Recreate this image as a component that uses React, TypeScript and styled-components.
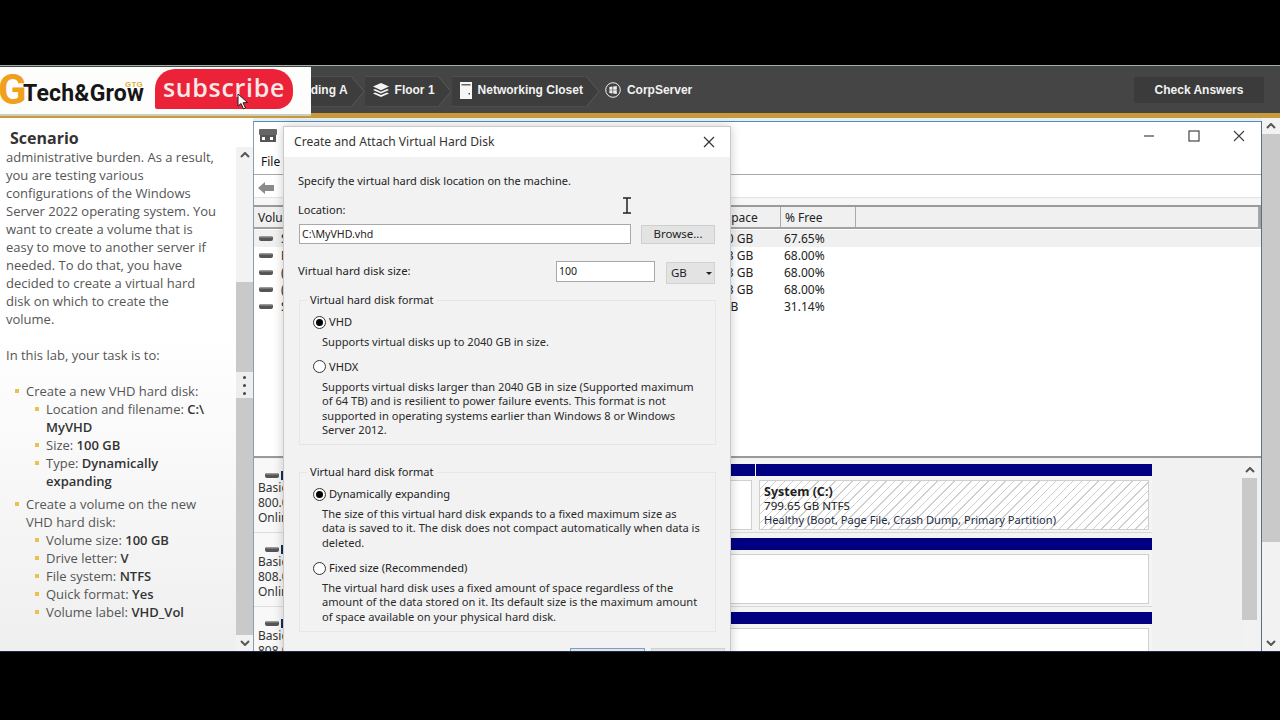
import React from "react";
import styled, { createGlobalStyle } from "styled-components";

const Global = createGlobalStyle`
  html, body { margin: 0; padding: 0; background: #000; overflow: hidden; }
  * { box-sizing: border-box; }
`;

const UI = `"Open Sans", "Noto Sans", sans-serif`;
const WIN = `"Noto Sans", "Open Sans", sans-serif`;

const Page = styled.div`
  width: 1280px; height: 720px; background: #000; display: flex; flex-direction: column;
`;
const Letterbox = styled.div<{ $h: number }>`
  height: ${(p) => p.$h}px; flex: none; background: #000;
`;
const Screen = styled.div`
  position: relative; height: 587px; flex: none; overflow: hidden; background: #e9eef1;
  display: flex; flex-direction: column; border-bottom: 1px solid #1c2a4a;
`;
const Toolbar = styled.div`
  height: 53px; flex: none; display: flex; align-items: center; justify-content: space-between;
  background: #454545; border-top: 1px solid #9fb0a8; padding: 0 16px 0 280px;
  border-bottom: 5px solid #c99a3c;
`;
const Crumbs = styled.div`
  display: flex; align-items: center; height: 31px; margin-top: 3px;
`;
const Crumb = styled.div`
  height: 31px; display: flex; align-items: center; gap: 6px; padding: 0 2px 2px 8px;
  font: bold 12px "Liberation Sans", sans-serif; color: #f2f2f2; white-space: nowrap;
  background: #3d3d3d; border-top: 1px solid #4e4e4e; border-bottom: 1px solid #4e4e4e;
`;
const LastCrumb = styled(Crumb)`
  background: transparent; border: none; padding: 0 0 2px 0; margin-left: 5px;
`;
const Check = styled.div`
  width: 130px; height: 26px; background: #3b3b3b; color: #f2f2f2; border-radius: 2px; margin-top: 1px;
  font: bold 12px "Liberation Sans", sans-serif; display: flex; align-items: center; justify-content: center;
`;
const Main = styled.div`
  flex: 1; min-height: 0; display: flex;
`;
const Lab = styled.div`
  width: 253px; flex: none; display: flex; flex-direction: column;
  background: linear-gradient(#fff 0%, #fff 40%, #efefef 100%);
  overflow: hidden;
`;
const LabTitle = styled.div`
  height: 29px; flex: none; padding: 10px 0 0 10px;
  font: bold 16px/20px ${UI}; color: #333;
`;
const LabBody = styled.div`
  flex: 1; min-height: 0; display: flex;
`;
const LabText = styled.div`
  width: 236px; flex: none; padding: 1px 0 0 6px; font: 13px/18px ${UI}; color: #555; white-space: nowrap;
`;
const Para = styled.div`
  margin-bottom: 18px;
`;
const Item = styled.div`
  position: relative; padding-left: 20px; margin-bottom: 5px;
  &::before {
    content: ""; position: absolute; left: 9px; top: 7px; width: 4px; height: 4px; background: #e8c24f;
  }
`;
const SubItem = styled.div`
  position: relative; padding-left: 20px;
  &::before {
    content: ""; position: absolute; left: 9px; top: 7px; width: 4px; height: 4px; background: #e8c24f;
  }
`;
const Strong = styled.b`
  font-weight: 600; color: #333;
`;
const Track = styled.div<{ $w: number; $top?: number }>`
  width: ${(p) => p.$w}px; flex: none; display: flex; flex-direction: column; background: #f2f2f2;
  margin-top: ${(p) => p.$top ?? 0}px;
`;
const Arrow = styled.div`
  height: 16px; flex: none; display: flex; align-items: center; justify-content: center; color: #555;
`;
const Gap = styled.div<{ $h: number }>`
  height: ${(p) => p.$h}px; flex: none;
`;
const Thumb = styled.div<{ $h?: number }>`
  ${(p) => (p.$h ? `height: ${p.$h}px; flex: none;` : "flex: 1;")} background: #c9c9c9;
`;
const Grip = styled.div`
  height: 26px; flex: none; background: #eee; border-radius: 3px; display: flex; flex-direction: column;
  align-items: center; justify-content: center; gap: 5px;
  i { width: 3px; height: 3px; border-radius: 50%; background: #444; display: block; }
`;
const Win = styled.div`
  flex: 1; min-width: 0; margin-top: 3px; background: #fff; display: flex; flex-direction: column;
  border-top: 1px solid #4d8fc4; border-left: 1px solid #88a0b4; border-right: 1px solid #5b6f82;
`;
const TitleRow = styled.div`
  height: 28px; flex: none; display: flex; align-items: center; padding-left: 5px;
`;
const Controls = styled.div`
  margin-left: auto; display: flex; align-items: center; gap: 33px; padding-right: 16px; color: #333;
`;
const MenuRow = styled.div`
  height: 25px; flex: none; padding-left: 7px; font: 12px/24px ${WIN}; color: #111;
  border-bottom: 1px solid #a9a9a9;
`;
const ToolRow = styled.div`
  height: 23px; flex: none; display: flex; align-items: center; padding: 3px 0 0 4px;
  border-bottom: 1px solid #e2e2e2;
`;
const ListArea = styled.div`
  flex: none; height: 260px; display: flex; flex-direction: column; background: #fff;
  border-top: 7px solid #f6f6f6; border-bottom: 2px solid #9a9a9a;
`;
const Head = styled.div`
  height: 24px; flex: none; display: flex; background: #f0f0f0;
  border-top: 2px solid #9a9a9a; border-bottom: 2px solid #a2a2a2; border-right: 2px solid #a2a2a2;
`;
const HeadCell = styled.div<{ $w?: number; $pad?: number }>`
  ${(p) => (p.$w ? `width: ${p.$w}px; flex: none;` : "flex: 1;")}
  border-right: 1px solid #a9a9a9; padding: 0 ${(p) => p.$pad ?? 4}px 0 4px; font: 12px/21px ${WIN}; color: #222;
  overflow: hidden; white-space: nowrap; text-align: ${(p) => (p.$pad ? "right" : "left")};
`;
const Row = styled.div<{ $sel?: boolean }>`
  height: 17px; flex: none; display: flex; align-items: center; font: 12px/17px ${WIN}; color: #222;
  background: ${(p) => (p.$sel ? "#f0f0f0" : "#fff")};
`;
const RowsWrap = styled.div`
  padding-top: 1px;
`;
const VolCell = styled.div`
  width: 439px; flex: none; display: flex; align-items: center; gap: 8px; padding-left: 5px;
`;
const SpaceCell = styled.div`
  width: 88px; flex: none; padding-left: 3px;
`;
const FreeCell = styled.div`
  padding-left: 3px;
`;
const DiskArea = styled.div`
  flex: 1; min-height: 0; display: flex; background: #f1f1f1; padding: 1px 4px 0 0;
`;
const DiskCol = styled.div`
  width: 898px; flex: none; display: flex; flex-direction: column; background: #f4f4f4;
`;
const DiskRow = styled.div`
  height: 74px; flex: none; display: flex;
`;
const DiskLabel = styled.div`
  width: 46px; flex: none; padding: 11px 0 0 4px; font: 12px/15px ${WIN}; color: #333; overflow: hidden;
  background: #f8f8f8; border-bottom: 1px solid #ddd; white-space: nowrap;
`;
const DiskIconLine = styled.div`
  height: 10px; display: flex; align-items: center; gap: 2px; padding-left: 7px;
`;
const NavyDot = styled.div`
  width: 4px; height: 9px; background: #12305e;
`;
const Parts = styled.div`
  flex: 1; min-width: 0; display: flex; gap: 1px; padding-top: 5px; border-bottom: 1px solid #d8d8d8;
`;
const Part = styled.div<{ $w?: number }>`
  ${(p) => (p.$w ? `width: ${p.$w}px; flex: none;` : "flex: 1; min-width: 0;")}
  display: flex; flex-direction: column; gap: 4px; padding-bottom: 4px;
  &::before { content: ""; height: 12px; flex: none; background: #000080; }
`;
const Box = styled.div<{ $hatch?: boolean }>`
  height: 50px; flex: none; margin: 0 3px; border: 1px solid #cfcfcf; padding: 4px 0 0 4px;
  font: 11.6px/14.2px ${WIN}; color: #222; white-space: nowrap;
  background: ${(p) =>
    p.$hatch ? "repeating-linear-gradient(135deg, #fff 0 5px, #cfcfcf 5px 6px)" : "#fff"};
`;
const BoxName = styled.b`
  font-size: 12.5px;
`;
const BoxStatus = styled.span`
  font-size: 11.1px; color: #1d2a44;
`;
const DiskSpacer = styled.div`
  flex: 1;
`;

const Dialog = styled.div`
  position: absolute; left: 283px; top: 61px; width: 448px; height: 560px; background: #f2f2f2;
  border: 1px solid #c9c9c9; box-shadow: 0 0 10px rgba(0, 0, 0, 0.2); font: 11.1px/16px ${WIN}; color: #222;
`;
const DialogHead = styled.div`
  height: 30px; background: #fff; display: flex; align-items: center; justify-content: space-between;
  padding: 0 15px 0 10px; font-size: 12.1px; color: #333;
`;
const DialogBody = styled.div`
  padding: 16px 15px 0 15px; display: flex; flex-direction: column;
`;
const Intro = styled.div`
  font-size: 11px; margin-left: -1px;
`;
const FieldLabel = styled.div`
  margin: 13px 0 6px -1px;
`;
const LocRow = styled.div`
  display: flex; align-items: center; gap: 10px;
`;
const TextBox = styled.div<{ $w: number; $h: number }>`
  width: ${(p) => p.$w}px; height: ${(p) => p.$h}px; flex: none; background: #fff; border: 1px solid #a8a8a8;
  padding-left: 2px; font-size: 10.6px; line-height: ${(p) => p.$h - 2}px;
`;
const Btn = styled.div<{ $w: number; $blue?: boolean }>`
  width: ${(p) => p.$w}px; height: 19px; flex: none; background: #e3e3e3; text-align: center; line-height: 16px;
  font-size: 11.5px; border: 1px solid ${(p) => (p.$blue ? "#7f9bd0" : "#cfcfcf")};
`;
const SizeRow = styled.div`
  display: flex; align-items: flex-start; margin-top: 17px; height: 23px;
`;
const SizeLabel = styled.div`
  flex: 1; line-height: 19px; font-size: 11.3px; margin-left: -1px;
`;
const Unit = styled.div`
  width: 49px; height: 22px; margin: 1px 0 0 11px; background: #e3e3e3; border: 1px solid #d2d2d2;
  display: flex; align-items: center; justify-content: space-between; padding: 0 2px 0 4px; font-size: 11.5px;
  &::after { content: ""; border: 3px solid transparent; border-top: 3px solid #222; border-bottom: 0; }
`;
const Group = styled.fieldset<{ $top: number }>`
  margin: ${(p) => p.$top}px 0 0 0; padding: 6px 0 6px 13px; width: 417px; min-width: 0; border: 1px solid #e6e6e6;
  legend { margin-left: -6px; padding: 0 3px; line-height: 16px; }
`;
const RadioRow = styled.div`
  display: flex; align-items: center; gap: 3px; height: 16px;
`;
const Radio = styled.span<{ $on?: boolean }>`
  width: 13px; height: 13px; flex: none; border-radius: 50%; border: 1px solid #333; background: #fff;
  display: flex; align-items: center; justify-content: center;
  &::after { content: ""; width: 7px; height: 7px; border-radius: 50%; background: ${(p) => (p.$on ? "#000" : "transparent")}; }
`;
const Desc = styled.div<{ $last?: boolean }>`
  margin: 4.7px 0 ${(p) => (p.$last ? 0 : 9.7)}px 9px; line-height: 14.6px; white-space: nowrap; color: #2a2a2a;
`;
const Buttons = styled.div`
  display: flex; gap: 6px; margin: 16px 5px 0 271px;
`;

const Brand = styled.div`
  position: absolute; left: 0; top: 2px; width: 311px; height: 49px; background: #fdfdfb;
  border-bottom: 2px solid #c8d0c0; display: flex; align-items: flex-start;
`;
const BrandG = styled.span`
  font: bold 42px/36px "Roboto", sans-serif; color: #f0a01c; width: 25px; margin: 5px 0 0 -2px; flex: none;
`;
const BrandName = styled.span`
  position: relative; font: bold 23px/26px "Roboto", sans-serif; color: #161616; width: 132px; flex: none;
  margin-top: 14px; white-space: nowrap; letter-spacing: 0.2px;
`;
const Tiny = styled.span`
  position: absolute; left: 102px; top: 0; font: bold 8px/8px "Liberation Sans", sans-serif; color: #e0b040;
`;
const Subscribe = styled.div`
  position: relative; margin-top: 2px; width: 138px; height: 40px; background: #ec2238; border-radius: 20px 20px 16px 2px;
  color: #f8e8e8; font: 600 25px/37px "Open Sans", sans-serif; text-align: center; letter-spacing: 0.7px;
`;
const Pointer = styled.svg`
  position: absolute; left: 82px; top: 24px;
`;
const IBeam = styled.svg`
  position: absolute; left: 621px; top: 132px;
`;

const Chevron = () => (
  <svg width="15" height="31" viewBox="0 0 15 31">
    <path d="M0 0 L1 0 L14 15.5 L1 31 L0 31 Z" fill="#3d3d3d" />
    <path d="M1 0 L14 15.5 L1 31" fill="none" stroke="#5a5a5a" />
  </svg>
);
const HddIcon = () => (
  <svg width="14" height="7" viewBox="0 0 14 7">
    <rect x="0" y="1" width="14" height="5" rx="2" fill="#555" />
    <rect x="1" y="1" width="12" height="1.5" fill="#999" />
  </svg>
);
const Up = () => (
  <svg width="10" height="6" viewBox="0 0 10 6">
    <path d="M1 5 L5 1 L9 5" fill="none" stroke="#555" strokeWidth="2" />
  </svg>
);
const Down = () => (
  <svg width="10" height="6" viewBox="0 0 10 6">
    <path d="M1 1 L5 5 L9 1" fill="none" stroke="#555" strokeWidth="2" />
  </svg>
);

const rows = [
  ["540.90 GB", "67.65%"],
  ["549.13 GB", "68.00%"],
  ["549.13 GB", "68.00%"],
  ["549.13 GB", "68.00%"],
  ["150 MB", "31.14%"],
];
const names = ["Simple", "Backup", "(E:)", "(F:)", "System"];

const App = () => (
  <Page>
    <Global />
    <Letterbox $h={65} />
    <Screen>
      <Toolbar>
        <Crumbs>
          <Crumb>Building A</Crumb>
          <Chevron />
          <Crumb>
            <svg width="16" height="14" viewBox="0 0 16 14">
              <path d="M8 0 L16 3.6 L8 7.2 L0 3.6 Z M2 6 L8 8.7 L14 6 L16 7 L8 10.6 L0 7 Z M2 9.4 L8 12 L14 9.4 L16 10.4 L8 14 L0 10.4 Z" fill="#f4f4f4" />
            </svg>
            Floor 1
          </Crumb>
          <Chevron />
          <Crumb>
            <svg width="12" height="17" viewBox="0 0 12 17">
              <path d="M0 0 H12 V17 H0 Z" fill="#f6f6f6" />
              <rect x="1.5" y="2" width="9" height="1.5" fill="#666" />
              <rect x="8.5" y="11" width="1.5" height="1.5" fill="#444" />
            </svg>
            Networking Closet
          </Crumb>
          <Chevron />
          <LastCrumb>
            <svg width="16" height="16" viewBox="0 0 16 16">
              <circle cx="8" cy="8" r="7.3" fill="none" stroke="#eee" />
              <path d="M4.4 5 L7.5 4.5 V7.7 H4.4 Z M8.2 4.4 L11.8 3.9 V7.7 H8.2 Z M4.4 8.3 H7.5 V11.4 L4.4 11 Z M8.2 8.3 H11.8 V12 L8.2 11.5 Z" fill="#eee" />
            </svg>
            CorpServer
          </LastCrumb>
        </Crumbs>
        <Check>Check Answers</Check>
      </Toolbar>
      <Main>
        <Lab>
          <LabTitle>Scenario</LabTitle>
          <LabBody>
            <LabText>
              <Para>
                administrative burden. As a result,<br />
                you are testing various<br />
                configurations of the Windows<br />
                Server 2022 operating system. You<br />
                want to create a volume that is<br />
                easy to move to another server if<br />
                needed. To do that, you have<br />
                decided to create a virtual hard<br />
                disk on which to create the<br />
                volume.
              </Para>
              <Para>In this lab, your task is to:</Para>
              <Item>
                Create a new VHD hard disk:
                <SubItem>Location and filename: <Strong>C:\<br />MyVHD</Strong></SubItem>
                <SubItem>Size: <Strong>100 GB</Strong></SubItem>
                <SubItem>Type: <Strong>Dynamically<br />expanding</Strong></SubItem>
              </Item>
              <Item>
                Create a volume on the new<br />VHD hard disk:
                <SubItem>Volume size: <Strong>100 GB</Strong></SubItem>
                <SubItem>Drive letter: <Strong>V</Strong></SubItem>
                <SubItem>File system: <Strong>NTFS</Strong></SubItem>
                <SubItem>Quick format: <Strong>Yes</Strong></SubItem>
                <SubItem>Volume label: <Strong>VHD_Vol</Strong></SubItem>
              </Item>
            </LabText>
            <Track $w={17}>
              <Arrow><Up /></Arrow>
              <Gap $h={119} />
              <Thumb $h={90} />
              <Grip><i /><i /><i /></Grip>
              <Thumb />
              <Arrow><Down /></Arrow>
            </Track>
          </LabBody>
        </Lab>
        <Win>
          <TitleRow>
            <svg width="18" height="14" viewBox="0 0 18 14">
              <rect x="0" y="0" width="18" height="6" rx="1" fill="#666" />
              <rect x="1" y="6" width="16" height="7" fill="#555" />
              <rect x="3" y="8" width="3" height="3" fill="#fff" />
              <rect x="11" y="8" width="3" height="3" fill="#fff" />
            </svg>
            <Controls>
              <svg width="12" height="12" viewBox="0 0 12 12"><path d="M1 6 H11" stroke="#444" strokeWidth="1.2" /></svg>
              <svg width="12" height="12" viewBox="0 0 12 12"><rect x="1" y="1" width="10" height="10" fill="none" stroke="#444" strokeWidth="1.2" /></svg>
              <svg width="12" height="12" viewBox="0 0 12 12"><path d="M1 1 L11 11 M11 1 L1 11" stroke="#444" strokeWidth="1.2" /></svg>
            </Controls>
          </TitleRow>
          <MenuRow>File</MenuRow>
          <ToolRow>
            <svg width="16" height="12" viewBox="0 0 16 12">
              <path d="M0 6 L7 0 V3 H16 V9 H7 V12 Z" fill="#8a8a8a" />
            </svg>
          </ToolRow>
          <ListArea>
            <Head>
              <HeadCell $w={439}>Volume</HeadCell>
              <HeadCell $w={88} $pad={23}>Free Space</HeadCell>
              <HeadCell $w={75}>% Free</HeadCell>
              <HeadCell />
            </Head>
            <RowsWrap>
              {rows.map((r, i) => (
                <Row key={names[i]} $sel={i === 0}>
                  <VolCell><HddIcon />{names[i]}</VolCell>
                  <SpaceCell>{r[0]}</SpaceCell>
                  <FreeCell>{r[1]}</FreeCell>
                </Row>
              ))}
            </RowsWrap>
          </ListArea>
          <DiskArea>
            <DiskCol>
              <DiskRow>
                <DiskLabel>
                  <DiskIconLine><HddIcon /><NavyDot /></DiskIconLine>
                  Basic<br />800.00 GB<br />Online
                </DiskLabel>
                <Parts>
                  <Part>
                    <Box />
                  </Part>
                  <Part $w={396}>
                    <Box $hatch>
                      <BoxName>System (C:)</BoxName><br />
                      799.65 GB NTFS<br />
                      <BoxStatus>Healthy (Boot, Page File, Crash Dump, Primary Partition)</BoxStatus>
                    </Box>
                  </Part>
                </Parts>
              </DiskRow>
              <DiskRow>
                <DiskLabel>
                  <DiskIconLine><HddIcon /><NavyDot /></DiskIconLine>
                  Basic<br />808.00 GB<br />Online
                </DiskLabel>
                <Parts><Part><Box /></Part></Parts>
              </DiskRow>
              <DiskRow>
                <DiskLabel>
                  <DiskIconLine><HddIcon /><NavyDot /></DiskIconLine>
                  Basic<br />808.00 GB<br />Online
                </DiskLabel>
                <Parts><Part><Box /></Part></Parts>
              </DiskRow>
            </DiskCol>
            <DiskSpacer />
            <Track $w={15} $top={3}>
              <Arrow><Up /></Arrow>
              <Thumb $h={142} />
              <DiskSpacer />
            </Track>
          </DiskArea>
        </Win>
        <Track $w={18}>
          <Arrow><Up /></Arrow>
          <Thumb $h={408} />
          <DiskSpacer />
          <Arrow><Down /></Arrow>
        </Track>
      </Main>

      <Brand>
        <BrandG>G</BrandG>
        <BrandName>Tech&amp;Grow<Tiny>GTG</Tiny></BrandName>
        <Subscribe>
          subscribe
          <Pointer width="12" height="17" viewBox="0 0 12 17">
            <path d="M1 1 L1 13 L4 10.5 L6.5 16 L8.5 15 L6 9.8 L10.5 9.5 Z" fill="#fff" stroke="#222" strokeWidth="1" />
          </Pointer>
        </Subscribe>
      </Brand>

      <Dialog>
        <DialogHead>
          Create and Attach Virtual Hard Disk
          <svg width="12" height="12" viewBox="0 0 12 12"><path d="M1 1 L11 11 M11 1 L1 11" stroke="#333" strokeWidth="1.2" /></svg>
        </DialogHead>
        <DialogBody>
          <Intro>Specify the virtual hard disk location on the machine.</Intro>
          <FieldLabel>Location:</FieldLabel>
          <LocRow>
            <TextBox $w={332} $h={20}>C:\MyVHD.vhd</TextBox>
            <Btn $w={74}>Browse...</Btn>
          </LocRow>
          <SizeRow>
            <SizeLabel>Virtual hard disk size:</SizeLabel>
            <TextBox $w={99} $h={21}>100</TextBox>
            <Unit>GB</Unit>
          </SizeRow>
          <Group $top={8}>
            <legend>Virtual hard disk format</legend>
            <RadioRow><Radio $on />VHD</RadioRow>
            <Desc>Supports virtual disks up to 2040 GB in size.</Desc>
            <RadioRow><Radio />VHDX</RadioRow>
            <Desc $last>
              Supports virtual disks larger than 2040 GB in size (Supported maximum<br />
              of 64 TB) and is resilient to power failure events. This format is not<br />
              supported in operating systems earlier than Windows 8 or Windows<br />
              Server 2012.
            </Desc>
          </Group>
          <Group $top={19}>
            <legend>Virtual hard disk format</legend>
            <RadioRow><Radio $on />Dynamically expanding</RadioRow>
            <Desc>
              The size of this virtual hard disk expands to a fixed maximum size as<br />
              data is saved to it. The disk does not compact automatically when data is<br />
              deleted.
            </Desc>
            <RadioRow><Radio />Fixed size (Recommended)</RadioRow>
            <Desc $last>
              The virtual hard disk uses a fixed amount of space regardless of the<br />
              amount of the data stored on it. Its default size is the maximum amount<br />
              of space available on your physical hard disk.
            </Desc>
          </Group>
          <Buttons>
            <Btn $w={75} $blue />
            <Btn $w={74} />
          </Buttons>
        </DialogBody>
      </Dialog>

      <IBeam width="12" height="17" viewBox="0 0 12 17">
        <path d="M2 1 H10 M2 16 H10 M6 1 V16" stroke="#222" strokeWidth="1.5" fill="none" />
      </IBeam>
    </Screen>
    <Letterbox $h={68} />
  </Page>
);

export default App;
